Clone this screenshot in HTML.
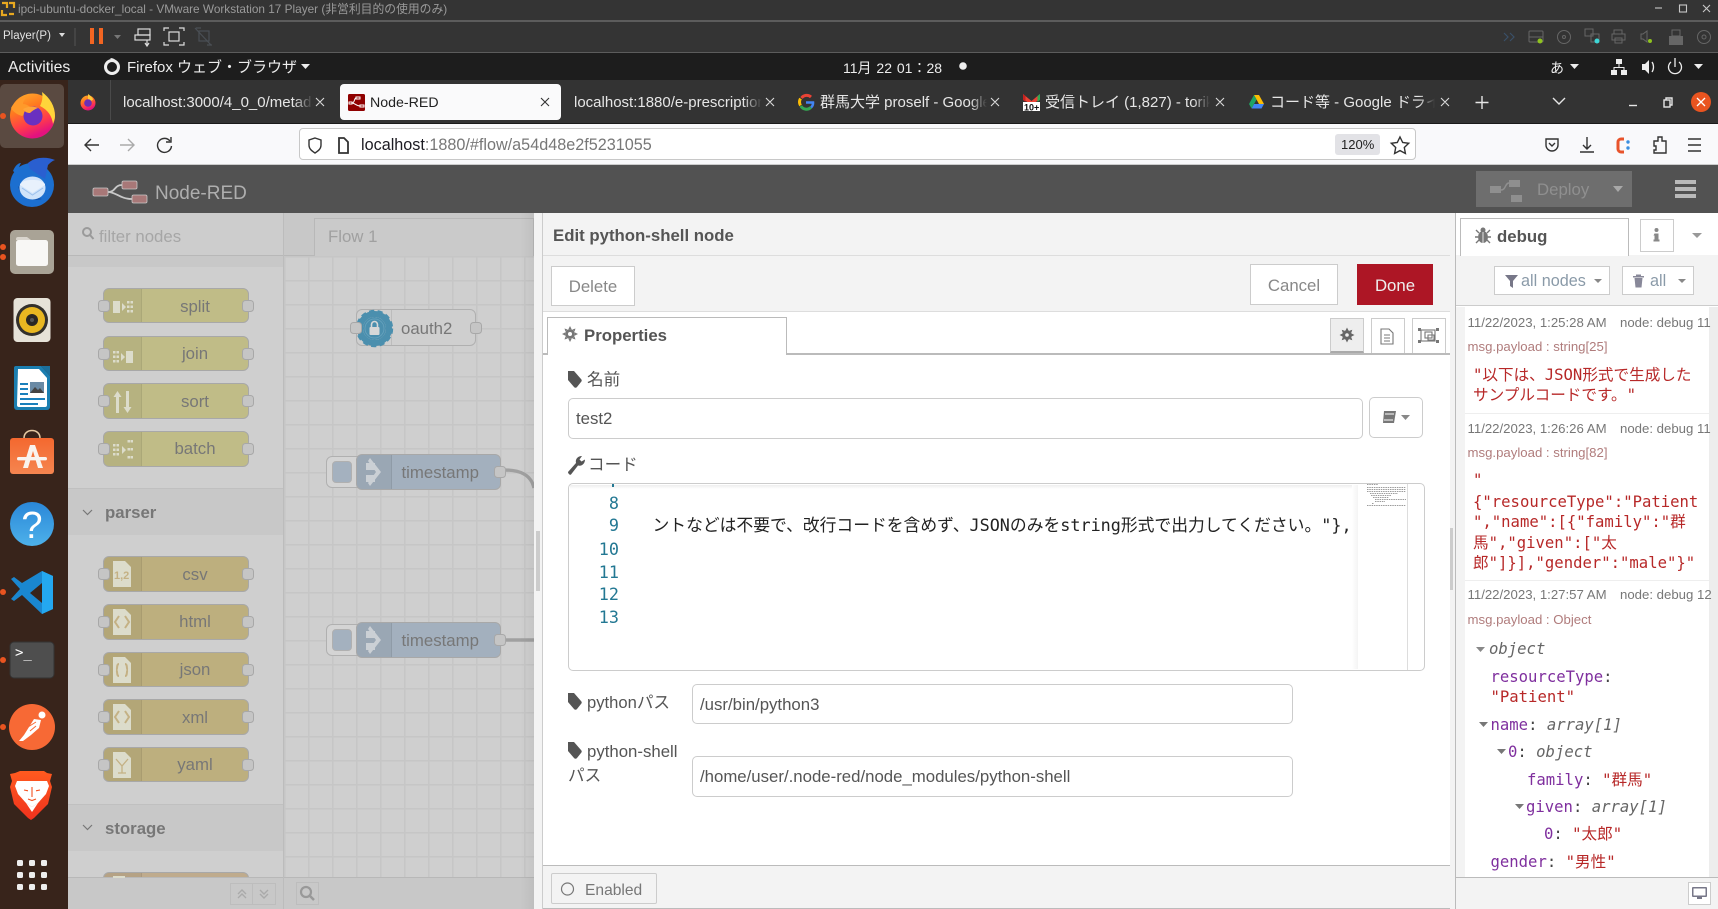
<!DOCTYPE html>
<html><head><meta charset="utf-8"><title>Node-RED</title>
<style>
html,body{margin:0;padding:0;width:1718px;height:909px;overflow:hidden;background:#cfcfcf;font-family:"Liberation Sans","Noto Sans CJK JP",sans-serif}
.b{position:absolute;box-sizing:border-box}
.t{position:absolute;white-space:nowrap;line-height:20px;height:20px}
.m{font-family:"DejaVu Sans Mono","Noto Sans CJK JP",monospace;font-size:15.6px}
.tab{color:#e6e6e6;font-size:15px;overflow:hidden}
.n{position:absolute;left:103px;width:146px;box-sizing:border-box;border:1.2px solid #a8a8a8;border-radius:6px}
.n i{position:absolute;left:0;top:0;bottom:0;width:37px;background:rgba(0,0,0,.05);border-radius:5px 0 0 5px;border-right:1px solid rgba(0,0,0,.06)}
.n span{position:absolute;left:38px;right:0;top:50%;margin-top:-10px;line-height:22px;text-align:center;color:#777;font-size:16.8px}
.n u,.p{position:absolute;width:12px;height:12px;box-sizing:border-box;background:#c5c5c5;border:1.2px solid #a8a8a8;border-radius:3.5px}
.n u{top:50%;margin-top:-6px}
.n u.l{left:-6px}.n u.r{right:-6px}
.cat{position:absolute;left:68px;width:215px;height:47px;background:#c8c8c8;border-top:1px solid #c0c0c0;box-sizing:border-box;color:#777;font-weight:bold;font-size:16.8px;line-height:47px;padding-left:37px}
.inp{position:absolute;box-sizing:border-box;background:#fff;border:1.2px solid #ccc;border-radius:5px;color:#555;font-size:16.8px;padding-left:7px}
.btn{position:absolute;box-sizing:border-box;background:#fff;border:1.2px solid #ccc;color:#888;font-size:16.8px;text-align:center}
.ln{color:#237893;text-align:right;font-family:"DejaVu Sans Mono",monospace;font-size:16.8px;left:580px;width:39px}
.lb{color:#555;font-size:16.6px}
.ts{color:#777;font-size:13.2px}
.pl{color:#b07c7c;font-size:13.2px}
.s{color:#b72828}.k{color:#7f2f9e}.g{color:#666;font-style:italic}.c{color:#444}
</style></head><body>

<!-- vmware chrome -->
<div class="b" style="left:0;top:0;width:1718px;height:53px;background:#343434"></div>
<div class="b" style="left:0;top:20px;width:1718px;height:1.5px;background:#5c5c5c"></div>
<div class="b" style="left:0;top:52px;width:1718px;height:1.5px;background:#5c5c5c"></div>
<div class="t" style="left:18px;top:-1px;font-size:11.8px;color:#9a9a9a">ipci-ubuntu-docker_local - VMware Workstation 17 Player (非営利目的の使用のみ)</div>
<div class="t" style="left:3px;top:26px;font-size:11.5px;color:#e2e2e2">Player(P)</div>
<!-- gnome bar -->
<div class="b" style="left:0;top:53px;width:1718px;height:27px;background:#1d1d1d"></div>
<div class="t" style="left:8px;top:57.500px;font-size:15.800px;color:#eee">Activities</div>
<div class="t" style="left:127px;top:58px;font-size:15px;color:#eee">Firefox ウェブ・ブラウザ</div>
<div class="t" style="left:843px;top:58px;font-size:14px;color:#eee;word-spacing:1px">11月 22 01：28</div>
<div class="t" style="left:1550px;top:58px;font-size:14px;color:#eee">あ</div>

<!-- dock -->
<div class="b" style="left:0;top:80px;width:68px;height:829px;background:#38241b"></div>
<div class="b" style="left:0;top:84px;width:64px;height:64px;background:#5a4a41;border-radius:5px"></div>

<!-- firefox tabs -->
<div class="b" style="left:68px;top:80px;width:1650px;height:44px;background:#333;border-bottom:1px solid #1a1a1a"></div>
<div class="b" style="left:110px;top:80px;width:1px;height:40px;background:#4a4a4a"></div>
<div class="b" style="left:340px;top:84px;width:221px;height:36px;background:#fafafb;border-radius:4px"></div>
<div class="t tab" style="left:123px;top:93px;width:190px;-webkit-mask-image:linear-gradient(90deg,#000 90%,transparent)">localhost:3000/4_0_0/metadata</div>
<div class="t tab" style="left:370px;top:93px;color:#222;font-size:14.200px">Node-RED</div>
<div class="t tab" style="left:574px;top:93px;width:188px;-webkit-mask-image:linear-gradient(90deg,#000 90%,transparent)">localhost:1880/e-prescription</div>
<div class="t tab" style="left:820px;top:93px;width:167px;-webkit-mask-image:linear-gradient(90deg,#000 90%,transparent)">群馬大学 proself - Google</div>
<div class="t tab" style="left:1045px;top:93px;width:165px;-webkit-mask-image:linear-gradient(90deg,#000 90%,transparent)">受信トレイ (1,827) - toriko</div>
<div class="t tab" style="left:1270px;top:93px;width:165px;-webkit-mask-image:linear-gradient(90deg,#000 90%,transparent)">コード等 - Google ドライブ</div>

<!-- nav bar -->
<div class="b" style="left:68px;top:124px;width:1650px;height:41px;background:#f9f9fb;border-bottom:1.5px solid #ccc"></div>
<div class="b" style="left:299px;top:128px;width:1117px;height:32px;background:#fff;border:1px solid #c8c8c8;border-radius:4px"></div>
<div class="t" style="left:361px;top:135px;font-size:16.200px;color:#777"><span style="color:#1c1b22">localhost</span>:1880/#flow/a54d48e2f5231055</div>
<div class="b" style="left:1335px;top:134px;width:45px;height:21px;background:#e2e2e6;border-radius:3px"></div>
<div class="t" style="left:1341px;top:135px;font-size:13px;color:#222">120%</div>

<!-- node-red header -->
<div class="b" style="left:68px;top:165px;width:1650px;height:48px;background:#525252"></div>
<div class="t" style="left:155px;top:183.500px;font-size:19px;color:#aeaeae">Node-RED</div>
<div class="b" style="left:1476px;top:171px;width:156px;height:36px;background:#6e6e6e"></div>
<div class="t" style="left:1537px;top:180px;font-size:16.8px;color:#8f8f8f">Deploy</div>
<div class="b" style="left:1675px;top:180px;width:21px;height:3.5px;background:#b9b9b9"></div>
<div class="b" style="left:1675px;top:187px;width:21px;height:3.5px;background:#b9b9b9"></div>
<div class="b" style="left:1675px;top:194px;width:21px;height:3.5px;background:#b9b9b9"></div>

<!-- palette -->
<div class="b" style="left:68px;top:213px;width:215px;height:43px;background:#cdcdcd;border-bottom:1.2px solid #b8b8b8"></div>
<div class="t" style="left:99px;top:227px;font-size:16.8px;color:#a6a6a6">filter nodes</div>
<div class="b" style="left:68px;top:256px;width:215px;height:11px;background:#c8c8c8"></div>
<div class="b" style="left:283px;top:213px;width:1.2px;height:696px;background:#bcbcbc"></div>

<div class="n" style="top:288px;height:35px;background:#c0bc87"><i></i><span>split</span><u class="l"></u><u class="r"></u></div>
<div class="n" style="top:336px;height:35px;background:#c0bc87"><i></i><span style="margin-top:-11px">join</span><u class="l"></u><u class="r"></u></div>
<div class="n" style="top:383px;height:36px;background:#c0bc87"><i></i><span>sort</span><u class="l"></u><u class="r"></u></div>
<div class="n" style="top:431px;height:36px;background:#c0bc87"><i></i><span style="margin-top:-11px">batch</span><u class="l"></u><u class="r"></u></div>
<div class="cat" style="top:488px">parser</div>
<div class="n" style="top:556px;height:36px;background:#bdaf7e"><i></i><span>csv</span><u class="l"></u><u class="r"></u></div>
<div class="n" style="top:604px;height:36px;background:#bdaf7e"><i></i><span style="margin-top:-11px">html</span><u class="l"></u><u class="r"></u></div>
<div class="n" style="top:652px;height:35px;background:#bdaf7e"><i></i><span style="margin-top:-11px">json</span><u class="l"></u><u class="r"></u></div>
<div class="n" style="top:699px;height:36px;background:#bdaf7e"><i></i><span>xml</span><u class="l"></u><u class="r"></u></div>
<div class="n" style="top:747px;height:35px;background:#bdaf7e"><i></i><span style="margin-top:-11px">yaml</span><u class="l"></u><u class="r"></u></div>
<div class="cat" style="top:804px">storage</div>
<div class="n" style="top:872px;height:36px;background:#bfab8d"><i></i></div>

<!-- workspace -->
<div class="b" style="left:284px;top:256px;width:250px;height:622px;background-color:#cfcfcf;background-image:linear-gradient(#c6c6c6 1.5px,transparent 1.5px),linear-gradient(90deg,#c6c6c6 1.5px,transparent 1.5px);background-size:24px 24px;background-position:0 0,0 0"></div>
<div class="b" style="left:284px;top:213px;width:250px;height:43px;background:#c8c8c8;border-bottom:1.2px solid #b8b8b8"></div>
<div class="b" style="left:314px;top:218px;width:220px;height:38px;background:#cacaca;border:1.2px solid #b8b8b8;border-bottom:0"></div>
<div class="t" style="left:328px;top:227px;font-size:16.8px;color:#a0a0a0">Flow 1</div>
<div class="b" style="left:68px;top:877px;width:466px;height:32px;background:#c8c8c8;border-top:1.2px solid #b8b8b8"></div>
<div class="b" style="left:283px;top:877px;width:1.2px;height:32px;background:#bcbcbc"></div>
<div class="b" style="left:230px;top:883px;width:46px;height:22px;border:1.2px solid #bdbdbd"></div>
<div class="b" style="left:252px;top:883px;width:1.2px;height:22px;background:#bdbdbd"></div>
<div class="b" style="left:296px;top:882px;width:23px;height:23px;border:1.2px solid #bdbdbd"></div>

<svg class="b" style="left:284px;top:256px;z-index:1" width="250" height="622"><path d="M220 214C235 214 247 218 250 232" fill="none" stroke="#a0a0a0" stroke-width="3.4"/><path d="M220 384H250" stroke="#a0a0a0" stroke-width="3.4"/></svg>

<div class="b" style="left:356px;top:309px;width:120px;height:37px;background:#cfcfcf;border:1.2px solid #b0b0b0;border-radius:6px;z-index:2"></div>
<div class="b" style="left:391px;top:310px;width:1px;height:35px;background:#bcbcbc;z-index:2"></div>
<div class="t" style="left:401px;top:319px;font-size:16.8px;color:#777;z-index:2">oauth2</div>
<div class="p" style="left:350px;top:322px;z-index:10"></div>
<div class="p" style="left:470px;top:322px;z-index:3"></div>

<div class="b" style="left:326px;top:456px;width:36px;height:32px;background:#d4d4d4;border:1.2px solid #b0b0b0;border-radius:6px;z-index:2"></div>
<div class="b" style="left:332px;top:461px;width:20px;height:22px;background:#a4b1bf;border:1.2px solid #b0b0b0;border-radius:4px;z-index:2"></div>
<div class="b" style="left:356px;top:454px;width:145px;height:36px;background:#a3b0be;border:1.2px solid #a8a8a8;border-radius:6px;z-index:2"></div>
<div class="b" style="left:357px;top:455px;width:35px;height:34px;background:rgba(0,0,0,.05);border-right:1px solid rgba(0,0,0,.07);border-radius:5px 0 0 5px;z-index:2"></div>
<div class="t" style="left:401.500px;top:463px;font-size:16.8px;color:#777;z-index:2">timestamp</div>
<div class="p" style="left:494px;top:466px;z-index:3"></div>

<div class="b" style="left:326px;top:624px;width:36px;height:32px;background:#d4d4d4;border:1.2px solid #b0b0b0;border-radius:6px;z-index:2"></div>
<div class="b" style="left:332px;top:629px;width:20px;height:22px;background:#a4b1bf;border:1.2px solid #b0b0b0;border-radius:4px;z-index:2"></div>
<div class="b" style="left:356px;top:622px;width:145px;height:36px;background:#a3b0be;border:1.2px solid #a8a8a8;border-radius:6px;z-index:2"></div>
<div class="b" style="left:357px;top:623px;width:35px;height:34px;background:rgba(0,0,0,.05);border-right:1px solid rgba(0,0,0,.07);border-radius:5px 0 0 5px;z-index:2"></div>
<div class="t" style="left:401.500px;top:631px;font-size:16.8px;color:#777;z-index:2">timestamp</div>
<div class="p" style="left:494px;top:634px;z-index:3"></div>

<div class="b" style="left:520px;top:213px;width:14px;height:696px;background:linear-gradient(90deg,rgba(0,0,0,0),rgba(0,0,0,.05));z-index:4"></div>

<!-- tray -->
<div class="b" style="left:534px;top:213px;width:9px;height:696px;background:#f3f3f3;border-right:1.2px solid #ccc;z-index:5"></div>
<div class="b" style="left:536px;top:531px;width:4px;height:60px;background:#ccc;z-index:5"></div>
<div class="b" style="left:543px;top:213px;width:907px;height:696px;background:#fff;z-index:5">
</div>
<div style="position:absolute;left:0;top:0;z-index:6">
<div class="b" style="left:543px;top:213px;width:907px;height:43px;background:#f3f3f3;border-bottom:1.2px solid #ddd"></div>
<div class="t" style="left:553px;top:226px;font-size:16.8px;font-weight:bold;color:#555">Edit python-shell node</div>
<div class="b" style="left:543px;top:256px;width:907px;height:56px;background:#f3f3f3;border-bottom:1.2px solid #ddd"></div>
<div class="btn" style="left:551px;top:266px;width:84px;height:40px;line-height:40px">Delete</div>
<div class="btn" style="left:1250px;top:264px;width:88px;height:41px;line-height:41px">Cancel</div>
<div class="b" style="left:1357px;top:264px;width:76px;height:41px;background:#ad1625;color:#eee;font-size:16.8px;text-align:center;line-height:43px">Done</div>

<div class="b" style="left:543px;top:353px;width:907px;height:1.5px;background:#bbb"></div>
<div class="b" style="left:547px;top:317px;width:240px;height:38px;background:#fff;border:1.2px solid #bbb;border-bottom:0"></div>
<div class="t" style="left:584px;top:326px;font-size:16.8px;font-weight:bold;color:#555">Properties</div>
<div class="b" style="left:1330px;top:318px;width:34px;height:35px;background:#eee;border:1.2px solid #ccc;border-bottom:2.5px solid #aaa"></div>
<div class="b" style="left:1371px;top:318px;width:34px;height:35px;background:#fff;border:1.2px solid #ccc;border-bottom:0"></div>
<div class="b" style="left:1412px;top:318px;width:34px;height:35px;background:#fff;border:1.2px solid #ccc;border-bottom:0"></div>

<div class="t lb" style="left:587px;top:370px">名前</div>
<div class="inp" style="left:568px;top:398px;width:795px;height:41px;line-height:39px">test2</div>
<div class="btn" style="left:1369px;top:397px;width:54px;height:41px;border-radius:5px"></div>
<div class="t lb" style="left:588px;top:455px">コード</div>

<div class="b" style="left:568px;top:483px;width:857px;height:188px;background:#fff;border:1.2px solid #ccc;border-radius:5px;overflow:hidden"></div>
<div class="b" style="left:570px;top:485px;width:788px;height:4px;background:linear-gradient(#eee,#fff)"></div>
<div class="b" style="left:1352px;top:485px;width:6px;height:184px;background:linear-gradient(90deg,#fff,#f4f4f4)"></div>
<div class="b" style="left:1407px;top:484px;width:1px;height:186px;background:#ddd"></div>

<div class="b" style="left:612px;top:484px;width:2px;height:3px;background:#237893"></div>
<div class="t ln" style="top:493px">8</div>
<div class="t ln" style="top:515px">9</div>
<div class="t ln" style="top:539px">10</div>
<div class="t ln" style="top:562px">11</div>
<div class="t ln" style="top:584px">12</div>
<div class="t ln" style="top:607px">13</div>
<div class="t" style="left:652.500px;top:515px;font-family:'DejaVu Sans Mono','Noto Sans CJK JP',monospace;font-size:16.8px;color:#222">ントなどは不要で、改行コードを含めず、JSONのみをstring形式で出力してください。"},</div>

<div class="t lb" style="left:587px;top:693px">pythonパス</div>
<div class="inp" style="left:692px;top:684px;width:601px;height:40px;line-height:39px">/usr/bin/python3</div>
<div class="t lb" style="left:587px;top:742px;font-size:16.8px">python-shell</div>
<div class="t lb" style="left:568px;top:766px">パス</div>
<div class="inp" style="left:692px;top:756px;width:601px;height:41px;line-height:40px">/home/user/.node-red/node_modules/python-shell</div>

<div class="b" style="left:543px;top:865px;width:907px;height:44px;background:#f3f3f3;border-top:1.2px solid #bbb;border-bottom:1.2px solid #bbb"></div>
<div class="b" style="left:551px;top:873px;width:106px;height:31px;background:#f3f3f3;border:1.2px solid #ccc;border-radius:2px"></div>
<div class="t" style="left:585px;top:881px;font-size:15.600px;color:#777">Enabled</div>

<!-- sidebar -->
<div class="b" style="left:1450px;top:213px;width:5px;height:696px;background:#f3f3f3"></div>
<div class="b" style="left:1450px;top:528px;width:3px;height:62px;background:#ccc"></div>
<div class="b" style="left:1455px;top:213px;width:263px;height:696px;background:#fff;border-left:1.2px solid #bbb"></div>
<div class="b" style="left:1456px;top:255px;width:262px;height:51px;background:#f3f3f3;border-bottom:1.2px solid #ccc"></div>
<div class="b" style="left:1460px;top:218px;width:169px;height:38px;background:#fff;border:1.2px solid #bbb;border-bottom:0"></div>
<div class="t" style="left:1497px;top:227px;font-size:16.8px;font-weight:bold;color:#555">debug</div>
<div class="b" style="left:1640px;top:219px;width:34px;height:33px;background:#fff;border:1.2px solid #ccc"></div>
<div class="btn" style="left:1494px;top:266px;width:116px;height:29px"></div>
<div class="t" style="left:1521px;top:271px;font-size:16.2px;color:#8a9aa8">all nodes</div>
<div class="btn" style="left:1622px;top:266px;width:72px;height:29px"></div>
<div class="t" style="left:1650px;top:271px;font-size:16.2px;color:#8a9aa8">all</div>

<div class="b" style="left:1456px;top:307px;width:9px;height:570px;background:#f3f3f3"></div>
<div class="b" style="left:1709px;top:307px;width:9px;height:570px;background:#ededed"></div>
<div class="b" style="left:1465px;top:413px;width:244px;height:1px;background:#eee"></div>
<div class="b" style="left:1465px;top:580px;width:244px;height:1px;background:#eee"></div>

<div class="t ts" style="left:1467.500px;top:313px">11/22/2023, 1:25:28 AM</div><div class="t ts" style="left:1620px;top:313px">node: debug 11</div>
<div class="t pl" style="left:1467.500px;top:337px">msg.payload : string[25]</div>
<div class="t m s" style="left:1473px;top:365px">"以下は、JSON形式で生成した</div>
<div class="t m s" style="left:1473px;top:385px">サンプルコードです。"</div>

<div class="t ts" style="left:1467.500px;top:419px">11/22/2023, 1:26:26 AM</div><div class="t ts" style="left:1620px;top:419px">node: debug 11</div>
<div class="t pl" style="left:1467.500px;top:443px">msg.payload : string[82]</div>
<div class="t m s" style="left:1473px;top:470px">"</div>
<div class="t m s" style="left:1473px;top:492px">{"resourceType":"Patient</div>
<div class="t m s" style="left:1473px;top:512px">","name":[{"family":"群</div>
<div class="t m s" style="left:1473px;top:533px">馬","given":["太</div>
<div class="t m s" style="left:1473px;top:553px">郎"]}],"gender":"male"}"</div>

<div class="t ts" style="left:1467.500px;top:585px">11/22/2023, 1:27:57 AM</div><div class="t ts" style="left:1620px;top:585px">node: debug 12</div>
<div class="t pl" style="left:1467.500px;top:610px">msg.payload : Object</div>
<div class="t m g" style="left:1489px;top:639px">object</div>
<div class="t m" style="left:1490.500px;top:667px"><span class="k">resourceType</span><span class="c">:</span></div>
<div class="t m s" style="left:1490.500px;top:687px">"Patient"</div>
<div class="t m" style="left:1490.500px;top:715px"><span class="k">name</span><span class="c">: </span><span class="g">array[1]</span></div>
<div class="t m" style="left:1508px;top:742px"><span class="k">0</span><span class="c">: </span><span class="g">object</span></div>
<div class="t m" style="left:1527px;top:770px"><span class="k">family</span><span class="c">: </span><span class="s">"群馬"</span></div>
<div class="t m" style="left:1526px;top:797px"><span class="k">given</span><span class="c">: </span><span class="g">array[1]</span></div>
<div class="t m" style="left:1544px;top:824px"><span class="k">0</span><span class="c">: </span><span class="s">"太郎"</span></div>
<div class="t m" style="left:1490.500px;top:852px"><span class="k">gender</span><span class="c">: </span><span class="s">"男性"</span></div>
<div class="b" style="left:1456px;top:877px;width:262px;height:32px;background:#f3f3f3;border-top:1.2px solid #bbb"></div>
<div class="b" style="left:1688px;top:882px;width:23px;height:23px;background:#fff;border:1.2px solid #ccc"></div>
</div>

<!-- all icons -->
<svg class="b" style="left:0;top:0;z-index:9" width="1718" height="909" viewBox="0 0 1718 909">
<defs>
<linearGradient id="ff" x1="0" y1="0" x2="0.4" y2="1"><stop offset="0" stop-color="#ffb52e"/><stop offset=".4" stop-color="#ff7a1f"/><stop offset=".75" stop-color="#ff3a4c"/><stop offset="1" stop-color="#e3127f"/></linearGradient>
<linearGradient id="oa" x1="0" y1="0" x2="0" y2="1"><stop offset="0" stop-color="#f4682f"/><stop offset="1" stop-color="#f58550"/></linearGradient>
<linearGradient id="he" x1="0" y1="0" x2="0" y2="1"><stop offset="0" stop-color="#2a87d8"/><stop offset="1" stop-color="#4db1ea"/></linearGradient>
<linearGradient id="br" x1="0" y1="0" x2="0" y2="1"><stop offset="0" stop-color="#ff5a1f"/><stop offset="1" stop-color="#f0321e"/></linearGradient>
</defs>
<!-- vmware logo -->
<g fill="none" stroke="#e8a820" stroke-width="2.200"><path d="M2 3h5v5M9 3h5v5M2 10v5h5M9 14h5"/></g>
<!-- vm toolbar -->
<path d="M59 33h6l-3 4z" fill="#ddd"/><path d="M75 28v18" stroke="#555"/>
<rect x="90" y="28" width="4" height="16" fill="#f26522"/><rect x="99" y="28" width="4" height="16" fill="#f26522"/>
<path d="M114 35h7l-3.500 4z" fill="#777"/>
<g fill="none" stroke="#ddd" stroke-width="1.200"><rect x="138" y="29" width="12" height="6"/><rect x="135" y="35" width="15" height="5"/><path d="M147 40v5M145 43l2 3 2-3"/><rect x="169" y="32" width="10" height="9"/><path d="M164 31v-3h5M184 31v-3h-5M164 42v3h5M184 42v3h-5"/></g>
<g fill="none" stroke="#4a4f55" stroke-width="1.200"><rect x="199" y="31" width="10" height="10"/><path d="M195 28l16 17M196 28h5M207 45h5"/></g>
<path d="M1504 33l4 4-4 4M1510 33l4 4-4 4" fill="none" stroke="#3a5068" stroke-width="1.200"/>
<g fill="none" stroke="#666" stroke-width="1"><rect x="1529" y="31" rx="1" width="14" height="11"/><path d="M1529 37h14"/><circle cx="1564" cy="37" r="6.500"/><circle cx="1564" cy="37" r="1.500"/><rect x="1585" y="29" width="8" height="7"/><rect x="1591" y="34" width="8" height="8"/><rect x="1614" y="30" width="8" height="4"/><rect x="1612" y="34" width="13" height="6"/><rect x="1615" y="38" width="7" height="5"/><path d="M1643 34l4-3v11l-4-3h-2v-5z"/><circle cx="1704" cy="37" r="6.500"/><circle cx="1704" cy="37" r="2"/></g>
<circle cx="1540" cy="41" r="2.500" fill="#8fc31f"/><circle cx="1597" cy="41" r="2.500" fill="#3ed6d6"/><circle cx="1650" cy="41" r="2" fill="#8fc31f"/>
<rect x="1669" y="36" width="14" height="9" fill="#666"/><rect x="1672" y="30" width="8" height="6" fill="none" stroke="#666"/>
<g fill="none" stroke="#c8c8c8" stroke-width="1.100"><path d="M1655 8h7"/><rect x="1679.500" y="5" width="7" height="7"/><path d="M1703 5l7 7M1710 5l-7 7"/></g>
<!-- gnome -->
<circle cx="112" cy="67" r="6.500" fill="none" stroke="#eee" stroke-width="3"/><path d="M110 58c4 0 7 2 6 6z" fill="#eee"/>
<path d="M301 64h9l-4.500 5z" fill="#eee"/>
<circle cx="963" cy="66" r="3.800" fill="#eee"/>
<path d="M1570 64h9l-4.500 5z" fill="#eee"/><path d="M1694 64h9l-4.500 5z" fill="#eee"/>
<g fill="#eee"><rect x="1616" y="59" width="6" height="5"/><rect x="1611" y="70" width="6" height="5"/><rect x="1621" y="70" width="6" height="5"/><path d="M1618.500 64h1v3h5v3h-1v-2h-9v2h-1v-3h5z"/><path d="M1642 64h3l4-4v14l-4-4h-3z"/></g>
<path d="M1652 62c2 3 2 7 0 10" fill="none" stroke="#eee" stroke-width="1.300"/>
<g fill="none" stroke="#eee" stroke-width="1.300"><path d="M1671 62a6.500 6.500 0 1 0 8 0"/><path d="M1675 58v9"/></g>

<!-- tabs icons -->
<circle cx="88" cy="103" r="7.500" fill="url(#ff)"/><path d="M88 94c3 2 5 4 5 6l-5 2z" fill="#ffc93a"/><circle cx="88" cy="103" r="3.800" fill="#6a2fb5"/>
<rect x="348" y="94" width="17" height="17" rx="1.500" fill="#8f0000"/><g fill="none" stroke="#fff" stroke-width="1"><rect x="349" y="102" width="3" height="2"/><rect x="356" y="97" width="4" height="2"/><rect x="360" y="105" width="4" height="2"/><path d="M352 103c3 0 2-5 4-5M352 103c3 0 4 3 8 3"/></g>
<!-- google -->
<g fill="none" stroke-width="3" transform="translate(-2 -0.500)"><path d="M813 97.500a6.500 6.500 0 0 0-9.500 1" stroke="#ea4335"/><path d="M802.500 99a7 7 0 0 0 0 7" stroke="#fbbc05"/><path d="M802.800 106.500a6.500 6.500 0 0 0 10 1.500" stroke="#34a853"/><path d="M813 108a6 6 0 0 0 2-5h-7" stroke="#4285f4" stroke-width="2.600"/></g>
<!-- gmail -->
<path d="M1023 94l8.500 7 8.500-7v5l-8.500 6-8.500-6z" fill="#ea4335"/><path d="M1023 94v6l2.500 2v-6z" fill="#c5221f"/><path d="M1040 94v6l-2.500 2v-6z" fill="#34a853"/><rect x="1023" y="102" width="17" height="9" fill="#fff"/><text x="1024" y="110.500" font-size="9" font-family="Liberation Sans" font-weight="bold" fill="#111">10+</text>
<!-- drive -->
<path d="M1254 95h5l5 9h-5z" fill="#fbbc05"/><path d="M1254 95l-5 9 2.600 4.500 5-9z" fill="#1fa463"/><path d="M1251.600 108.500l2.500-4.500H1264l-2.500 4.500z" fill="#4285f4"/>
<!-- tab close marks -->
<g fill="none" stroke="#dcdcdc" stroke-width="1.100"><path d="M316 98l8 8M324 98l-8 8M766 98l8 8M774 98l-8 8M991 98l8 8M999 98l-8 8M1216 98l8 8M1224 98l-8 8M1441 98l8 8M1449 98l-8 8"/><path d="M541 98l8 8M549 98l-8 8" stroke="#333"/></g>
<g stroke="#e6e6e6" stroke-width="1.400" fill="none"><path d="M1482 96v13M1475.500 102.500h13"/><path d="M1553 98l6 6 6-6"/><path d="M1629 105.500h8"/><rect x="1664" y="100" width="6" height="7"/><path d="M1666 100v-2h6v7h-2"/></g>
<circle cx="1701" cy="102" r="10" fill="#e95420"/><path d="M1697 98l8 8M1705 98l-8 8" stroke="#fff" stroke-width="1.300"/>
<!-- nav -->
<g fill="none" stroke="#333" stroke-width="1.400"><path d="M99 145H86M91 139l-6 6 6 6"/><path d="M120 145h13M128 139l6 6-6 6" stroke="#aaa"/><path d="M170 141a7 7 0 1 0 1.500 5"/><path d="M171 137v5h-5"/>
<path d="M315 138l6 2v5c0 4-3 6-6 8-3-2-6-4-6-8v-5z"/><path d="M339 138h5l4 4v11h-9z" stroke-width="1.800"/>
<path d="M1400 137l2.700 5.500 6 .8-4.400 4.200 1.100 6-5.400-2.900-5.400 2.900 1.100-6-4.400-4.200 6-.8z"/>
<path d="M1546 139h12v6a6 6 0 0 1-12 0zM1549 143l3 3 3-3"/>
<path d="M1587 137v12M1583 145l4 4 4-4M1580 152h14"/>
<path d="M1654 141h4v-4h4v4h4v12h-12v-3h2v-4h-2z"/>
<path d="M1688 139h13M1688 145h13M1688 151h13"/></g>
<path d="M1624 139h-3a3 3 0 0 0-3 3v7a3 3 0 0 0 3 3h3" fill="none" stroke="#e8532b" stroke-width="3"/><circle cx="1628" cy="142" r="1.700" fill="#3b8fe0"/><circle cx="1628" cy="148" r="1.700" fill="#3b8fe0"/>
<!-- NR logo -->
<g fill="#a87878" stroke="#c8c8c8" stroke-width=".8"><rect x="93" y="188" width="15" height="8" rx="1.500"/><rect x="122" y="181" width="15" height="8" rx="1.500"/><rect x="132" y="195" width="15" height="8" rx="1.500"/></g>
<path d="M108 192c8 0 6-7 14-7M108 192c8 0 12 7 24 7" fill="none" stroke="#c8c8c8" stroke-width="1.800"/>
<g fill="#8f8f8f"><rect x="1490" y="186" width="11" height="7"/><rect x="1509" y="180" width="11" height="7"/><rect x="1511" y="195" width="11" height="7"/></g><path d="M1501 190c5 0 4-7 8-7" stroke="#8f8f8f" fill="none" stroke-width="1.500"/>
<path d="M1613 186h10l-5 6z" fill="#a8a8a8"/>
<!-- palette search etc -->
<circle cx="87" cy="232" r="4" fill="none" stroke="#9a9a9a" stroke-width="2"/><path d="M90 235l3.500 4" stroke="#9a9a9a" stroke-width="2"/>
<path d="M83 510l4.500 4.500 4.500-4.500M83 825l4.500 4.500 4.500-4.500" fill="none" stroke="#777" stroke-width="1.200"/>
<circle cx="306" cy="892" r="5" fill="none" stroke="#999" stroke-width="2.200"/><path d="M310 896l4 4" stroke="#999" stroke-width="2.500"/>
<path d="M238 894l4-4 4 4M238 898l4-4 4 4M260 890l4 4 4-4M260 894l4 4 4-4" fill="none" stroke="#aaa" stroke-width="1.400"/>
<!-- palette icons -->
<g fill="#dcdccb">
<rect x="113" y="301" width="7" height="12"/><path d="M122 303l4 4-4 4z"/><g><rect x="127" y="301" width="2.500" height="2.500"/><rect x="130.500" y="301" width="2.500" height="2.500"/><rect x="127" y="305.500" width="2.500" height="2.500"/><rect x="130.500" y="305.500" width="2.500" height="2.500"/><rect x="127" y="310" width="2.500" height="2.500"/><rect x="130.500" y="310" width="2.500" height="2.500"/></g>
<rect x="126" y="351" width="7" height="12"/><path d="M121 353l4 4-4 4z"/>
<g transform="translate(-14 50)"><rect x="127" y="301" width="2.500" height="2.500"/><rect x="130.500" y="301" width="2.500" height="2.500"/><rect x="127" y="305.500" width="2.500" height="2.500"/><rect x="130.500" y="305.500" width="2.500" height="2.500"/><rect x="127" y="310" width="2.500" height="2.500"/><rect x="130.500" y="310" width="2.500" height="2.500"/></g>
<path d="M117.500 391l4 6h-2.500v16h-3v-16h-2.500z"/><path d="M126 391h3v16h2.500l-4 6-4-6h2.500z"/>
<g transform="translate(-14 143)"><rect x="127" y="301" width="2.500" height="2.500"/><rect x="130.500" y="301" width="2.500" height="2.500"/><rect x="127" y="305.500" width="2.500" height="2.500"/><rect x="130.500" y="305.500" width="2.500" height="2.500"/><rect x="127" y="310" width="2.500" height="2.500"/><rect x="130.500" y="310" width="2.500" height="2.500"/></g>
<path d="M122 446l4 4-4 4z"/><rect x="127.500" y="440" width="2.500" height="2.500"/><rect x="130.500" y="440" width="2.500" height="2.500"/><rect x="127.500" y="448" width="2.500" height="2.500"/><rect x="130.500" y="448" width="2.500" height="2.500"/><rect x="127.500" y="456" width="2.500" height="2.500"/><rect x="130.500" y="456" width="2.500" height="2.500"/>
<path d="M113 561h12l6 6v20h-18z"/><path d="M113 609h12l6 6v20h-18z"/><path d="M113 657h12l6 6v20h-18z"/><path d="M113 704h12l6 6v20h-18z"/><path d="M113 752h12l6 6v20h-18z"/>
<path d="M113 876h12v2h-12z"/>
</g>
<g font-family="Liberation Sans" fill="#c4b184" font-weight="bold"><text x="114" y="579" font-size="11">1,2</text></g>
<g fill="none" stroke="#c4b184" stroke-width="2"><path d="M119 616l-4 6 4 6M125 616l4 6-4 6M119 711l-4 6 4 6M125 711l4 6-4 6"/><path d="M119 664c-3 0-1 6-3 6 2 0 0 6 3 6M125 664c3 0 1 6 3 6-2 0 0 6-3 6"/><path d="M116 759l6 7 6-7M122 766v7M118 773h8" stroke-width="1.300"/></g>
<!-- inject icon -->
<g fill="#cbd0d5"><path d="M370 458l11 14-11 14-2-3 8-11-8-11z"/><path d="M366 463h9v7h-9zM366 475h9v7h-9z"/><path d="M370 626l11 14-11 14-2-3 8-11-8-11z"/><path d="M366 631h9v7h-9zM366 643h9v7h-9z"/></g>
<!-- gear oauth -->
<circle cx="374.500" cy="328.500" r="14.500" fill="none" stroke="#4b8fae" stroke-width="6"/><circle cx="374.500" cy="328.500" r="16.800" fill="none" stroke="#4b8fae" stroke-width="3.800" stroke-dasharray="5 3.200"/><circle cx="374.500" cy="328.500" r="11.500" fill="#4b8fae"/>
<circle cx="374.500" cy="328.500" r="9.500" fill="none" stroke="#6ba5bf" stroke-width=".7"/>
<rect x="369.500" y="327" width="10" height="8" rx="1" fill="#d8d8d8"/><path d="M371.500 327v-2.500a3 3 0 0 1 6 0v2.500" fill="none" stroke="#d8d8d8" stroke-width="1.600"/>
<!-- tray icons -->
<g transform="translate(0 -2)"><g fill="#777"><circle cx="570" cy="336" r="5"/><path d="M570 328l1.500 3h-3zM570 344l1.500-3h-3zM562 336l3-1.500v3zM578 336l-3-1.500v3zM564.500 330.500l3 1-2 2zM575.500 341.500l-3-1 2-2zM575.500 330.500l-1 3-2-2zM564.500 341.500l1-3 2 2z"/></g><circle cx="570" cy="336" r="2" fill="#fff"/></g>
<g fill="#555"><path d="M568 371h6l7 8c1 1 1 2 0 3l-4 5c-1 1-2 1-3 0l-6-7z"/><path d="M568 693h6l7 8c1 1 1 2 0 3l-4 5c-1 1-2 1-3 0l-6-7z"/><path d="M568 742h6l7 8c1 1 1 2 0 3l-4 5c-1 1-2 1-3 0l-6-7z"/><path d="M568 472l8-9c-1-4 2-7 6-7l-2.500 3.500 2 2 3.500-2c0 4-3 7-7 6l-7 9c-1 1-3-1-3-2.500z"/></g>
<g fill="#666"><circle cx="1347" cy="335" r="4.800"/><path d="M1347 327.500l1.500 3h-3zM1347 342.500l1.500-3h-3zM1339.500 335l3-1.500v3zM1354.500 335l-3-1.500v3zM1341.700 329.700l3 1-2 2zM1352.300 340.300l-3-1 2-2zM1352.300 329.700l-1 3-2-2zM1341.700 340.300l1-3 2 2z"/></g><circle cx="1347" cy="335" r="1.800" fill="#eee"/>
<g fill="none" stroke="#777" stroke-width="1.100"><path d="M1381 329h8l4 4v11h-12zM1384 335h6M1384 338h6M1384 341h6"/><rect x="1421" y="330" width="14" height="11"/><rect x="1425" y="332" width="7" height="6"/><path d="M1428 335h6v5h-6z"/></g>
<g fill="#777"><rect x="1418" y="328" width="3" height="3"/><rect x="1436" y="328" width="3" height="3"/><rect x="1418" y="340" width="3" height="3"/><rect x="1436" y="340" width="3" height="3"/></g>
<path d="M1384 411h12l-2 12h-11z" fill="#777"/><path d="M1384 420h9M1385 414h9" stroke="#fff" stroke-width=".9"/><path d="M1401 415h9l-4.500 5z" fill="#888"/>
<circle cx="567.500" cy="889" r="6" fill="none" stroke="#777" stroke-width="1.200"/>
<!-- minimap -->
<g stroke="#8a8a8a" stroke-width="1" stroke-dasharray="1.500 .8" opacity=".85"><path d="M1367 484.500h11M1367 487.500h39M1367 489.500h39M1367 491.500h39M1370 493.500h28M1371 495.500h20M1373 497.500h16M1375 499.500h31M1375 501.500h10M1372 503.500h2M1367 505.500h39"/></g>
<!-- debug icons -->
<g fill="#777"><ellipse cx="1483" cy="237" rx="5" ry="6"/><circle cx="1483" cy="230" r="2.500"/><path d="M1476 230l3 3M1490 230l-3 3M1475 237h3M1491 237h-3M1476 243l3-3M1490 243l-3-3" stroke="#777" stroke-width="1.400"/></g>
<path d="M1483 232v11" stroke="#fff" stroke-width=".8"/>
<g fill="#888"><circle cx="1656.500" cy="230" r="2"/><path d="M1654.500 233.500h4v6h1v2h-6v-2h1v-4h-1z"/></g>
<path d="M1692 233h10l-5 5z" fill="#999"/>
<path d="M1505 275h13l-5 6v7l-3-2v-5z" fill="#778"/><path d="M1594 279h8l-4 4z" fill="#888"/>
<path d="M1634.500 278h8l-1 9.500h-6zM1633 276h11v1.500h-11zM1636 274.500h5v1.500h-5z" fill="#889"/><path d="M1678 279h8l-4 4z" fill="#888"/>
<path d="M1476 647h9l-4.500 5z" fill="#888"/><path d="M1479 722h9l-4.500 5zM1497 749h9l-4.500 5zM1515 804h9l-4.500 5z" fill="#777"/>
<rect x="1692" y="887" width="15" height="10" rx="1" fill="#778"/><rect x="1693.500" y="888.500" width="12" height="7" fill="#fff"/><rect x="1697" y="897" width="5" height="2" fill="#778"/>
<!-- dock icons -->
<g fill="#e95420"><circle cx="3" cy="116" r="3"/><circle cx="3" cy="247" r="3"/><circle cx="3" cy="257" r="3"/><circle cx="3" cy="592" r="3"/><circle cx="3" cy="660" r="3"/><circle cx="3" cy="727" r="3"/></g>
<circle cx="32.500" cy="116" r="22.500" fill="url(#ff)"/><path d="M42 92c8 6 13 14 13 24 0 3-1 5-2 8-1-8-5-14-13-18 2-4 3-8 2-14z" fill="#ffd43a"/><path d="M11 108c3-6 9-10 15-10-2 2-3 4-3 6 4 0 8 3 9 6l-10 6c-4-1-9-4-11-8z" fill="#ff9a2a"/><circle cx="33" cy="116" r="9.500" fill="#6a30c0"/><path d="M23 109c5-3 11-3 15-1-3 1-6 3-8 5-3 0-5-1-7-4z" fill="#ffa53a"/>
<g transform="translate(0 11)"><circle cx="32" cy="174" r="22" fill="#1c6fd0"/><path d="M13 160c2-5 5-8 8-8-3 5-3 10-1 14z" fill="#1c6fd0"/><path d="M28 152c8-7 20-6 27-3-3 1-5 3-7 5l-3 14-15-10z" fill="#2a5fd0"/><path d="M18 175c2 10 12 16 24 13-10-2-17-6-24-13z" fill="#0f4fa8"/></g><ellipse cx="32.500" cy="188" rx="13" ry="11.500" fill="#cfe3fa"/><path d="M20 185l12.500 8 12.500-8v-1c-4-4-8-4-12.500-4s-9 0-12.500 4z" fill="#e8f1fc"/><path d="M22 188l10.500 7 10.500-7" fill="none" stroke="#9cc0ec" stroke-width="1"/>
<rect x="10" y="230" width="44" height="44" rx="5" fill="#a9a396"/><path d="M16 239a2 2 0 0 1 2-2h9l4 3h-15z" fill="#d9d5cd"/><rect x="16" y="240" width="32" height="26" rx="2.500" fill="#f8f7f5"/>
<rect x="13.500" y="298" width="37" height="44" rx="4" fill="#e6e2d8"/><circle cx="32" cy="320" r="16" fill="#33302c"/><circle cx="32" cy="320" r="13" fill="#e9b721"/><circle cx="32" cy="320" r="6" fill="#2a2724"/><circle cx="32" cy="320" r="2" fill="#555"/>
<path d="M16 366h25l9 10v31a3 3 0 0 1-3 3H17a3 3 0 0 1-3-3V368a2 2 0 0 1 2-2z" fill="#1b7eb0"/><path d="M18 369h21l8 9v27a2 2 0 0 1-2 2H19a2 2 0 0 1-2-2z" fill="#fff"/><path d="M41 366h9v10z" fill="#1b6f9c"/><g fill="#1a7fbb"><rect x="20" y="383" width="8" height="2"/><rect x="20" y="388" width="8" height="2"/><rect x="20" y="393" width="8" height="2"/><rect x="20" y="398" width="25" height="2"/><rect x="20" y="403" width="18" height="2"/></g><rect x="30" y="382" width="14" height="11" fill="#6a8aa5"/><path d="M30 393l5-6 3 3 2-2 4 5z" fill="#444"/>
<rect x="10" y="438" width="44" height="36" rx="3" fill="url(#oa)"/><path d="M24 438c0-10 16-10 16 0" fill="none" stroke="#e6c9a2" stroke-width="1.500"/><g fill="#f9f3ee"><path d="M30 445h5l8 23h-5l-5-17-5 17h-5z"/><rect x="17" y="457" width="30" height="3.400" rx="1.700"/></g>
<circle cx="32" cy="524" r="22" fill="url(#he)"/><text x="32" y="538" text-anchor="middle" font-family="Liberation Sans" font-size="38" fill="#fff">?</text>
<path d="M42 571l11 5v33l-11 5-20-19-8 6-3-2 9-10-9-10 3-2 8 6zM42 583l-12 10 12 10z" fill="#1a87d0"/><path d="M42 571l11 5v33l-11 5z" fill="#24a8f0"/>
<rect x="10" y="642" width="44" height="36" rx="4" fill="#4e4e4e" stroke="#333"/><text x="15" y="657" font-family="DejaVu Sans Mono" font-size="14" fill="#fff">&gt;_</text>
<circle cx="32" cy="727" r="23" fill="#f76935"/><g fill="#fff"><circle cx="42" cy="715" r="3.500"/><path d="M19 741l5-6 10-16 7 1-2 8-8 7-8 6z"/></g><path d="M28 727l8-5M30 731l6-5" stroke="#f76935"/>
<path d="M20 771h24l3 2 5 1-2 7 2 6-4 17-14 14-3 2-3-2-14-14-4-17 2-6-2-7 5-1z" fill="url(#br)"/><path d="M17 781h30l2 5-3 8-8 9-6 4-6-4-8-9-3-8z" fill="#fff"/><path d="M32 807l6-4-6 9-6-9z" fill="#fff"/><path d="M32 787v10M24 790l4 .8M40 790l-4 .8M28 799l4 1.500 4-1.500" fill="none" stroke="#f4501f" stroke-width="1.100"/>
<g fill="#eee"><rect x="17" y="860" width="6" height="6" rx="1.500"/><rect x="29" y="860" width="6" height="6" rx="1.500"/><rect x="41" y="860" width="6" height="6" rx="1.500"/><rect x="17" y="872" width="6" height="6" rx="1.500"/><rect x="29" y="872" width="6" height="6" rx="1.500"/><rect x="41" y="872" width="6" height="6" rx="1.500"/><rect x="17" y="884" width="6" height="6" rx="1.500"/><rect x="29" y="884" width="6" height="6" rx="1.500"/><rect x="41" y="884" width="6" height="6" rx="1.500"/></g>
</svg>
</body></html>
